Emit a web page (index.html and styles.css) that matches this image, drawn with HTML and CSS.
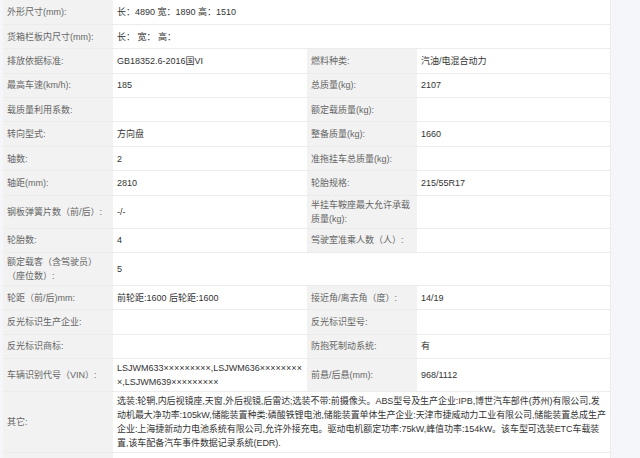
FILE: index.html
```html
<!DOCTYPE html>
<html lang="zh-CN">
<head>
<meta charset="utf-8">
<title>车辆参数</title>
<link rel="stylesheet" href="styles.css">
</head>
<body>
<table class="spec">
  <colgroup>
    <col class="c-lab"><col class="c-val"><col class="c-lab"><col class="c-val2">
  </colgroup>
  <tbody>
    <tr><td class="lab">外形尺寸(mm):</td><td class="val" colspan="3">长：4890 宽：1890 高：1510</td></tr>
    <tr><td class="lab">货箱栏板内尺寸(mm):</td><td class="val" colspan="3">长： 宽： 高：</td></tr>
    <tr><td class="lab">排放依据标准:</td><td class="val">GB18352.6-2016国VI</td><td class="lab">燃料种类:</td><td class="val">汽油/电混合动力</td></tr>
    <tr><td class="lab">最高车速(km/h):</td><td class="val">185</td><td class="lab">总质量(kg):</td><td class="val">2107</td></tr>
    <tr><td class="lab">载质量利用系数:</td><td class="val"></td><td class="lab">额定载质量(kg):</td><td class="val"></td></tr>
    <tr><td class="lab">转向型式:</td><td class="val">方向盘</td><td class="lab">整备质量(kg):</td><td class="val">1660</td></tr>
    <tr><td class="lab">轴数:</td><td class="val">2</td><td class="lab">准拖挂车总质量(kg):</td><td class="val"></td></tr>
    <tr><td class="lab">轴距(mm):</td><td class="val">2810</td><td class="lab">轮胎规格:</td><td class="val">215/55R17</td></tr>
    <tr><td class="lab">钢板弹簧片数（前/后）:</td><td class="val">-/-</td><td class="lab">半挂车鞍座最大允许承载质量(kg):</td><td class="val"></td></tr>
    <tr><td class="lab">轮胎数:</td><td class="val">4</td><td class="lab">驾驶室准乘人数（人）:</td><td class="val"></td></tr>
    <tr><td class="lab">额定载客（含驾驶员）（座位数）:</td><td class="val" colspan="3">5</td></tr>
    <tr><td class="lab">轮距（前/后)mm:</td><td class="val">前轮距:1600 后轮距:1600</td><td class="lab">接近角/离去角（度）:</td><td class="val">14/19</td></tr>
    <tr><td class="lab">反光标识生产企业:</td><td class="val"></td><td class="lab">反光标识型号:</td><td class="val"></td></tr>
    <tr><td class="lab">反光标识商标:</td><td class="val"></td><td class="lab">防抱死制动系统:</td><td class="val">有</td></tr>
    <tr><td class="lab">车辆识别代号（VIN）:</td><td class="val vin">LSJWM633×××××××××,LSJWM636×××××××××,LSJWM639×××××××××</td><td class="lab">前悬/后悬(mm):</td><td class="val">968/1112</td></tr>
    <tr><td class="lab">其它:</td><td class="val long" colspan="3">选装:轮辋,内后视镜座,天窗,外后视镜,后雷达;选装不带:前摄像头。ABS型号及生产企业:IPB,博世汽车部件(苏州)有限公司,发<br>动机最大净功率:105kW,储能装置种类:磷酸铁锂电池,储能装置单体生产企业:天津市捷威动力工业有限公司,储能装置总成生产<br>企业:上海捷新动力电池系统有限公司,允许外接充电。驱动电机额定功率:75kW,峰值功率:154kW。该车型可选装ETC车载装<br>置,该车配备汽车事件数据记录系统(EDR).</td></tr>
    <tr><td class="lab"></td><td class="val" colspan="3"></td></tr>
  </tbody>
</table>
</body>
</html>
```

FILE: styles.css
```css
html, body {
  margin: 0;
  padding: 0;
  background: #f5f6f9;
}

body {
  font-family: "Liberation Sans", "Noto Sans CJK SC", sans-serif;
  font-size: 9px;
}

.spec {
  margin-left: 3px;
  width: 607px;
  table-layout: fixed;
  border-collapse: collapse;
  border-right: 1px solid #ececec;
}

.c-lab { width: 110px; }
.c-val { width: 194px; }
.c-val2 { width: 193px; }

.spec tr {
  height: 24.4px;
}

.spec td {
  padding: 2px 4px;
  line-height: 14px;
  vertical-align: middle;
  border-bottom: 1px solid #ececec;
}

.lab {
  background: #f2f2f2;
  color: #666;
  padding-left: 5px;
}

.val {
  background: #fff;
  color: #333;
}

.vin {
  word-break: break-all;
}

.long {
  line-height: 15px;
  letter-spacing: -0.06px;
  padding-right: 0;
  white-space: nowrap;
}
```
